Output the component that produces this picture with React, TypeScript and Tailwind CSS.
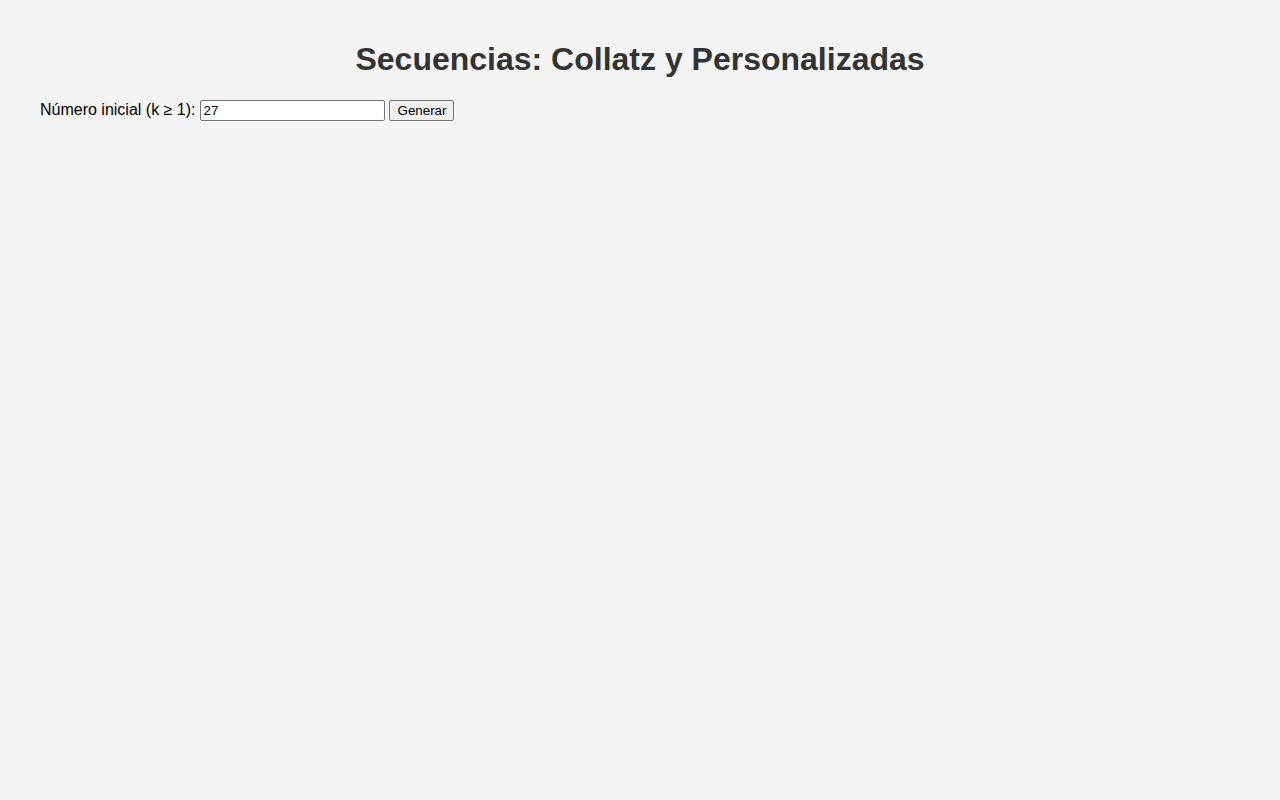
import React, { useState } from "react";

export default function App() {
  const [value, setValue] = useState("27");
  return (
    <div className="min-h-screen bg-[#f4f4f4] px-[40px] pt-[41px] font-['Liberation_Sans',Arial,sans-serif] text-black">
      <h1 className="text-center text-[32px] font-bold leading-[37px] text-[#333]">
        Secuencias: Collatz y Personalizadas
      </h1>
      <div className="mt-[22px] flex items-center text-[16px] leading-[18px]">
        <label htmlFor="k" className="mb-[2px]">Número inicial (k ≥ 1):</label>
        <input
          id="k"
          type="number"
          value={value}
          onChange={(e) => setValue(e.target.value)}
          className="ml-[5px] h-[21px] w-[185px] rounded-[2px] border border-[#767676] bg-white px-[2px] font-['Liberation_Sans',Arial,sans-serif] text-[13.33px] text-black outline-none [appearance:textfield]"
        />
        <button className="ml-[4px] h-[21px] w-[65px] rounded-[2px] border border-[#767676] bg-[#efefef] px-[6px] font-['Liberation_Sans',Arial,sans-serif] text-[13.33px] text-black">
          Generar
        </button>
      </div>
    </div>
  );
}
